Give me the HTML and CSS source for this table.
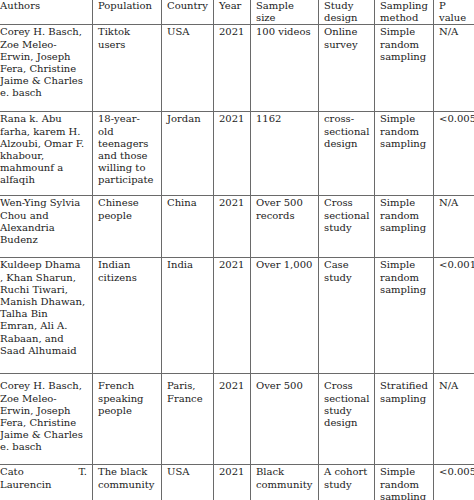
FILE: index.html
```html
<!DOCTYPE html>
<html>
<head>
<meta charset="utf-8">
<link rel="stylesheet" href="styles.css">
</head>
<body>
<table class="studies">
  <colgroup>
    <col class="c-auth">
    <col class="c-pop">
    <col class="c-country">
    <col class="c-year">
    <col class="c-size">
    <col class="c-design">
    <col class="c-method">
    <col class="c-p">
  </colgroup>
  <thead>
    <tr class="r0">
      <th>Authors</th>
      <th>Population</th>
      <th>Country</th>
      <th>Year</th>
      <th>Sample<br>size</th>
      <th>Study<br>design</th>
      <th>Sampling<br>method</th>
      <th>P<br>value</th>
    </tr>
  </thead>
  <tbody>
    <tr class="r1">
      <td>Corey H. Basch, Zoe Meleo-Erwin, Joseph Fera, Christine Jaime &amp; Charles e. basch</td>
      <td>Tiktok users</td>
      <td>USA</td>
      <td>2021</td>
      <td>100 videos</td>
      <td>Online survey</td>
      <td>Simple random sampling</td>
      <td>N/A</td>
    </tr>
    <tr class="r2">
      <td>Rana k. Abu farha, karem H. Alzoubi, Omar F. khabour, mahmounf a alfaqih</td>
      <td>18-year-old teenagers and those willing to participate</td>
      <td>Jordan</td>
      <td>2021</td>
      <td>1162</td>
      <td>cross-sectional design</td>
      <td>Simple random sampling</td>
      <td>&lt;0.005</td>
    </tr>
    <tr class="r3">
      <td>Wen-Ying Sylvia Chou and Alexandria Budenz</td>
      <td>Chinese people</td>
      <td>China</td>
      <td>2021</td>
      <td>Over 500 records</td>
      <td>Cross sectional study</td>
      <td>Simple random sampling</td>
      <td>N/A</td>
    </tr>
    <tr class="r4">
      <td>Kuldeep Dhama<br>, Khan Sharun,<br>Ruchi Tiwari,<br>Manish Dhawan,<br>Talha Bin<br>Emran, Ali A.<br>Rabaan, and<br>Saad Alhumaid</td>
      <td>Indian citizens</td>
      <td>India</td>
      <td>2021</td>
      <td>Over 1,000</td>
      <td>Case study</td>
      <td>Simple random sampling</td>
      <td>&lt;0.001</td>
    </tr>
    <tr class="r5">
      <td>Corey H. Basch, Zoe Meleo-Erwin, Joseph Fera, Christine Jaime &amp; Charles e. basch</td>
      <td>French speaking people</td>
      <td>Paris, France</td>
      <td>2021</td>
      <td>Over 500</td>
      <td>Cross sectional study design</td>
      <td>Stratified sampling</td>
      <td>N/A</td>
    </tr>
    <tr class="r6">
      <td class="justify">Cato T. Laurencin</td>
      <td>The black community</td>
      <td>USA</td>
      <td>2021</td>
      <td>Black community</td>
      <td>A cohort study</td>
      <td>Simple random sampling</td>
      <td>&lt;0.005</td>
    </tr>
  </tbody>
</table>
</body>
</html>
```
FILE: styles.css
```css
html, body {
  margin: 0;
  padding: 0;
  background: #ffffff;
  overflow: hidden;
}

.studies {
  border-collapse: collapse;
  table-layout: fixed;
  width: 500px;
  margin-left: -7px;
  margin-top: -1px;
  font-family: "DejaVu Serif", "Liberation Serif", serif;
  font-size: 10px;
  line-height: 12.2px;
  color: #222222;
}

.c-auth { width: 99px; }
.c-pop { width: 69px; }
.c-country { width: 52px; }
.c-year { width: 37px; }
.c-size { width: 68px; }
.c-design { width: 56px; }
.c-method { width: 59px; }
.c-p { width: 60px; }

.studies th,
.studies td {
  border: 1px solid #6a6a6a;
  padding: 1px 2px 0 5px;
  vertical-align: top;
  text-align: left;
  font-weight: normal;
  white-space: normal;
  overflow: hidden;
}

.studies th {
  padding-top: 0;
}

.studies td:first-child,
.studies th:first-child {
  padding-left: 6px;
  padding-right: 5px;
}

.studies td:nth-child(2) {
  padding-right: 6px;
}

.r0 { height: 25px; }
.r1 { height: 87px; }
.r2 { height: 84px; }
.r3 { height: 62px; }
.r4 { height: 116px; }
.r5 { height: 91px; }
.r6 { height: 60px; }

.r5 td { padding-top: 6px; }

.studies td.justify {
  text-align: justify;
}
```
